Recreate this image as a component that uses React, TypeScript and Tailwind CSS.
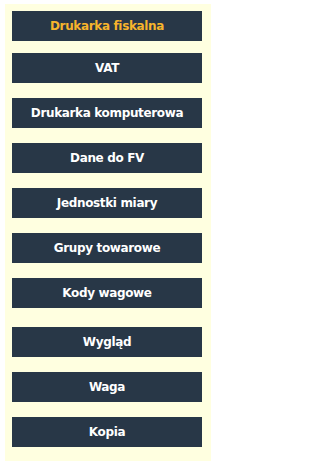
const items: { label: string; gap: string; active?: boolean }[] = [
  { label: "Drukarka fiskalna", gap: "mt-0", active: true },
  { label: "VAT", gap: "mt-[12px]" },
  { label: "Drukarka komputerowa", gap: "mt-[15px]" },
  { label: "Dane do FV", gap: "mt-[15px]" },
  { label: "Jednostki miary", gap: "mt-[15px]" },
  { label: "Grupy towarowe", gap: "mt-[15px]" },
  { label: "Kody wagowe", gap: "mt-[15px]" },
  { label: "Wygląd", gap: "mt-[19px]" },
  { label: "Waga", gap: "mt-[15px]" },
  { label: "Kopia", gap: "mt-[15px]" },
];

export default function App() {
  return (
    <div className="w-[215px] h-[465px] bg-white pt-[4px] pl-[5px]">
      <div className="flex h-[457px] w-[206px] flex-col bg-[#ffffe0] pt-[7px] pl-[7px]">
        {items.map((item) => (
          <button
            key={item.label}
            type="button"
            className={`${item.gap} flex h-[30px] w-[190px] items-center justify-center bg-[#283747] text-[12px] font-bold tracking-[-0.35px] ${
              item.active ? "text-[#f7b52c]" : "text-white"
            }`}
            style={{ fontFamily: '"DejaVu Sans", Verdana, sans-serif' }}
          >
            {item.label}
          </button>
        ))}
      </div>
    </div>
  );
}
